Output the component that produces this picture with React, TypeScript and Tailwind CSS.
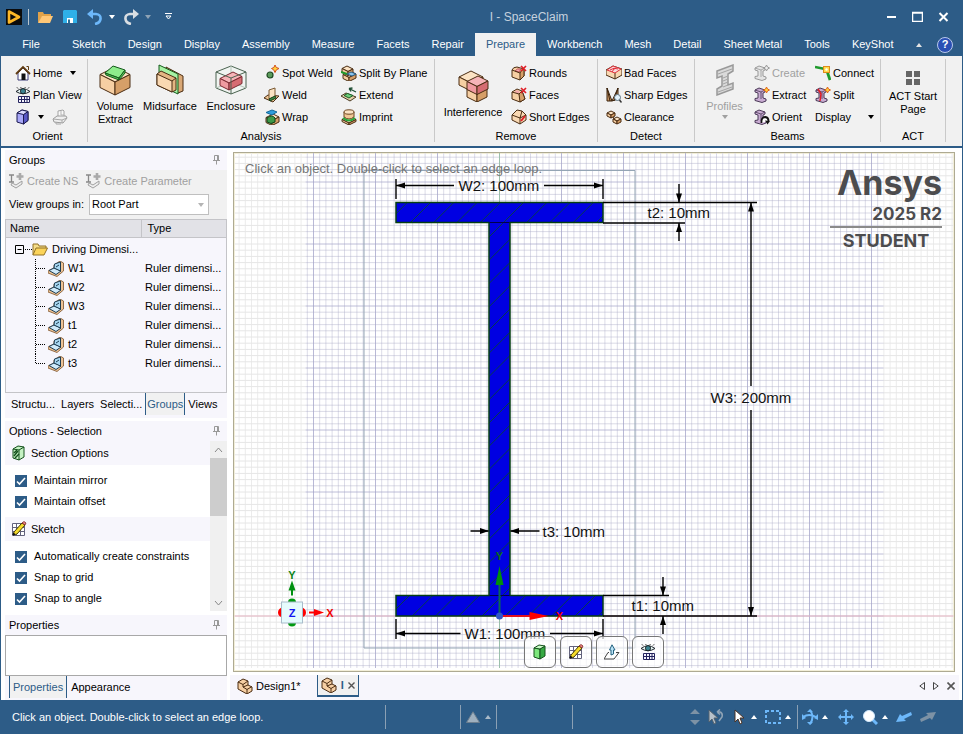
import { useState } from "react";
import type { ReactNode } from "react";
import clsx from "clsx";

type Tone = { top: string; left: string; right: string; line?: string };

const TAN: Tone = { top: "#fbe3c4", left: "#f6cfa3", right: "#d69f68" };
const PINK: Tone = { top: "#f6b4b8", left: "#f09aa0", right: "#d66c72" };

// Isometric block: x/y is the back corner, a runs right, b runs left, h is the height
const Block = ({ x, y, a, b, h, tone = TAN }: { x: number; y: number; a: number; b: number; h: number; tone?: Tone }) => {
    const p0 = [x, y];
    const p1 = [x + a, y + a / 2];
    const p2 = [x + a - b, y + (a + b) / 2];
    const p3 = [x - b, y + b / 2];
    const down = (p: number[]) => [p[0], p[1] + h];
    const pts = (...list: number[][]) => list.map((p) => p.join(",")).join(" ");
    return (
        <g stroke={tone.line ?? "#4a2c12"} strokeLinejoin="round" strokeWidth="1">
            <polygon points={pts(p0, p1, p2, p3)} fill={tone.top} />
            <polygon points={pts(p3, p2, down(p2), down(p3))} fill={tone.left} />
            <polygon points={pts(p2, p1, down(p1), down(p2))} fill={tone.right} />
        </g>
    );
};

const Svg = ({ size = 16, children }: { size?: 16 | 32; children: ReactNode }) => (
    <svg
        viewBox={size === 16 ? "0 0 16 16" : "0 0 32 32"}
        className={clsx("shrink-0", size === 16 ? "h-4 w-4" : "h-8 w-8")}
        fill="none"
        aria-hidden="true"
    >
        {children}
    </svg>
);

const Caret = ({ up, className }: { up?: boolean; className?: string }) => (
    <svg viewBox="0 0 6 4" className={clsx("h-1 w-1.5 shrink-0", className)} fill="currentColor" aria-hidden="true">
        <path d={up ? "M0 4h6L3 0z" : "M0 0h6L3 4z"} />
    </svg>
);

/* ---------- icons ---------- */

const HomeIcon = () => (
    <Svg>
        <path d="M3 8v7h10V8L8 3z" fill="#fff" stroke="#3d3c78" />
        <path d="M1 9l7-7 7 7" stroke="#5f3a10" strokeWidth="1.8" />
        <path d="M11.5 1.5h2V5" stroke="#5f3a10" />
        <path d="M6.5 8.5h4V15h-4z" fill="#111" />
    </Svg>
);

const EyeGridIcon = () => (
    <Svg>
        <path d="M1 4.500Q8-1 15 4.500 8 9 1 4.500z" fill="#e8f6f6" stroke="#1b2228" />
        <circle cx="8" cy="4.2" r="2.6" fill="#3c8390" stroke="#111" strokeWidth=".8" />
        <path d="M3 1.500L2 .4M6 .8L5.700 0M10 .8l.3-.8M13 1.500L14 .4" stroke="#111" />
        <path d="M3.500 9.500h11v6h-11zM3.500 12.500h11M6.500 9.500v6M9.500 9.500v6M12 9.500v6" fill="#f5f5ff" stroke="#25245e" />
    </Svg>
);

const PurpleCubeIcon = () => (
    <Svg>
        <path d="M2 4l5-3 6 1.500v9L8.500 15 2 13z" fill="#a9a8f8" stroke="#1b1a50" />
        <path d="M8.500 5.500L13 2.500v9L8.500 15z" fill="#5857c4" stroke="#1b1a50" />
        <path d="M2 4l6.500 1.500L13 2.500 7 1z" fill="#dcdcff" stroke="#1b1a50" />
    </Svg>
);

const GreyPlaneIcon = () => (
    <Svg>
        <path d="M6 8V2l5-1 1 1v6" fill="#f8f8f8" stroke="#a4a4a4" />
        <path d="M1 10l4-3h9l1 2-4 5-9-1z" fill="#efefef" stroke="#9c9c9c" />
        <path d="M1 10l9 1 5-2M10 11v3M4 13v2h5" stroke="#a8a8a8" />
        <path d="M9 2v4h3" stroke="#b5b5b5" />
    </Svg>
);

const VolumeIcon = () => (
    <Svg size={32}>
        <Block x={16} y={3} a={15} b={15} h={13} />
        <path d="M6 9l8-7 12 4-6 8z" fill="#8eec8c" stroke="#155a1c" />
        <path d="M6 9l14 5v2L7 11zM20 14l6-8v3l-6 7z" fill="#58cc5d" stroke="#155a1c" />
    </Svg>
);

const MidsurfaceIcon = () => (
    <Svg size={32}>
        <path d="M12 3l17 9v15l-5 2-12-8z" fill="#d9a876" stroke="#4a2c12" />
        <path d="M5 1l19 9v20L5 21z" fill="#a6f3a4" stroke="#155a1c" />
        <path d="M3 10l4-3 15 7v12l-4 2-15-7z" fill="#e3b583" stroke="#4a2c12" />
        <path d="M3 10l15 7v11L3 21z" fill="#f9d8b2" stroke="#4a2c12" />
        <path d="M18 17l4-3" stroke="#4a2c12" />
    </Svg>
);

const EnclosureIcon = () => (
    <Svg size={32}>
        <path d="M16 2l15 6v16l-15 6L1 24V8z" fill="#f0f4f1" stroke="#4a6350" />
        <path d="M1 24l15-6 15 6M16 2v16" stroke="#b4c4b8" />
        <Block x={18} y={8} a={9} b={13} h={7} tone={{ ...PINK, line: "#7a2830" }} />
        <path d="M1 8l15 6 15-6M16 14v16" stroke="#4a6350" />
    </Svg>
);

const InterferenceIcon = () => (
    <Svg size={32}>
        <Block x={20} y={13} a={10} b={10} h={9} />
        <Block x={14} y={1} a={12} b={12} h={8} />
        <Block x={21} y={6} a={10} b={11} h={8} tone={PINK} />
    </Svg>
);

const ProfilesIcon = () => (
    <Svg size={32}>
        <path
            d="M8 7l16-6v6l-5 3v11l5-2v6L8 31v-6l5-3V12l-5 2z"
            fill="#dadada"
            stroke="#999"
            strokeWidth="1.500"
        />
        <path d="M9 10l14-5M14 14l5-2M14 17l5-2M14 20l5-2M14 23l5-2M9 28l14-5" stroke="#a5a5a5" />
    </Svg>
);

const SpotWeldIcon = () => (
    <Svg>
        <circle cx="6" cy="10" r="3" fill="#5a9b5a" stroke="#1f4a22" strokeWidth="1.2" />
        <path d="M11 0l1.200 2.400L15 3.500l-2.600 1.300L11 7.500 9.700 4.800 7.500 3.500l2.400-1z" fill="#ffd23c" stroke="#d4501c" />
    </Svg>
);

const WeldIcon = () => (
    <Svg>
        <path d="M0 11l4-3 11 1-6 6z" fill="#f0c795" stroke="#4a2c12" />
        <path d="M5 3l6-2v9l-6 2z" fill="#fbe3c4" stroke="#7a5a34" />
        <path d="M5 12l6-3 1 2-6 3z" fill="#3d8a45" stroke="#14401a" />
    </Svg>
);

const WrapIcon = () => (
    <Svg>
        <Block x={9} y={5} a={6} b={7} h={5} />
        <path d="M2 3.500L8 1l5 2-5 3z" fill="#2f9ddc" stroke="#156a9c" />
        <path d="M3 9q5-4 8 0v4q-4 3-8 0z" fill="#3e9a48" stroke="#123f18" />
    </Svg>
);

const SplitIcon = () => (
    <Svg>
        <Block x={9} y={6} a={6} b={7} h={4} />
        <Block x={6} y={1} a={6} b={5} h={4} />
        <path d="M6 9l4-2 5 2-4 2z" fill="#8cc6ee" stroke="#2c5f86" />
        <path d="M0 7l6 2" stroke="#1f9a2c" strokeWidth="2" />
    </Svg>
);

const ExtendIcon = () => (
    <Svg>
        <path d="M0 9l5-3 10 4-6 4z" fill="#e3cfa8" stroke="#4a3a22" />
        <path d="M3 8.500L6.500 6.500l5.500 2-4 2.500z" fill="#6fcf7a" stroke="#1c5c26" />
        <path d="M15 5L8 1.500M8 1.500l3.500-.5M8 1.500l2 3" stroke="#1d4d33" strokeWidth="1.300" />
    </Svg>
);

const ImprintIcon = () => (
    <Svg>
        <Block x={8} y={7} a={7} b={7} h={2} />
        <path d="M3 3v5q5 4 10 0V3" fill="#f0c795" stroke="#6a4420" />
        <ellipse cx="8" cy="3" rx="5" ry="2.200" fill="#fbe3c4" stroke="#6a4420" />
        <path d="M2 9q6 5 12 0" stroke="#28a83a" strokeWidth="1.800" />
    </Svg>
);

const Cross = () => <path d="M10 1l5 5M15 1l-5 5" stroke="#e01e26" strokeWidth="1.700" />;

const RoundsIcon = () => (
    <Svg>
        <path d="M1 5q1-3 5-3l7 2v7l-4 4-8-3z" fill="#f6cfa3" stroke="#4a2c12" />
        <path d="M9 8q1-3 4-4v7l-4 4z" fill="#d69f68" stroke="#4a2c12" />
        <path d="M4 6q2-3 6-2l-2 3z" fill="#f4a9ac" stroke="#c2525a" />
        <path d="M1 5l8 3" stroke="#4a2c12" />
        <Cross />
    </Svg>
);

const FacesIcon = () => (
    <Svg>
        <path d="M1 5l5-3 5 2 3 8-5 3-8-3z" fill="#f6cfa3" stroke="#4a2c12" />
        <path d="M8 7l3-3 3 8-5 3z" fill="#d69f68" stroke="#4a2c12" />
        <path d="M3 5l3-2 3 2-2 1.500z" fill="#f4a9ac" />
        <path d="M1 5l7 2" stroke="#4a2c12" />
        <Cross />
    </Svg>
);

const ShortEdgesIcon = () => (
    <Svg>
        <path d="M1 6l5-5 5 1 4 4v5l-6 4-8-4z" fill="#f9d8b2" stroke="#4a2c12" />
        <path d="M1 6l8 3 6-3M9 9v6M9 9l2-7" stroke="#4a2c12" />
        <path d="M10 12l4-5" stroke="#e01e26" strokeWidth="2" />
    </Svg>
);

const BadFacesIcon = () => (
    <Svg>
        <path d="M0 5l7-4 9 3v6l-7 4-9-4z" fill="#f9d8b2" stroke="#4a2c12" />
        <path d="M9 8v6" stroke="#4a2c12" />
        <path d="M1 5l6-4 8 3-6 4z" fill="#fbd9dc" stroke="#e0303a" />
        <path d="M4 5q4-3 8-1M6 7q2-4 4-4" stroke="#e0303a" />
    </Svg>
);

const SharpEdgesIcon = () => (
    <Svg>
        <path d="M1 1l5 13H1zM12 1L6 14l6-2z" fill="#c99664" stroke="#3a220c" />
        <path d="M1 1l3 13M12 1L8 14" stroke="#3a220c" />
        <circle cx="11.500" cy="10.500" r="3" fill="#e2f1fa" stroke="#5e7482" />
        <path d="M13.500 13l2 2.500" stroke="#333" strokeWidth="1.500" />
    </Svg>
);

const ClearanceIcon = () => (
    <Svg>
        <Block x={5} y={2} a={4} b={4} h={3} />
        <Block x={11} y={8} a={4} b={4} h={3} />
        <path d="M7 8l2 3" stroke="#4a2c12" />
    </Svg>
);

const BeamIcon = ({ kind }: { kind: "create" | "extract" | "orient" | "split" }) => {
    const off = kind === "create";
    const line = off ? "#999" : "#4b3a58";
    return (
        <Svg>
            <path
                d="M1 3l4-2 6 2v2l-2 1v5l3 1v2l-4 1.500-7-2v-2l3-.5V6L1 5z"
                fill={off ? "#e4e4e4" : "#c9acd2"}
                stroke={line}
            />
            <path d="M1 3l6 2 4-2M7 5v7" stroke={line} strokeWidth=".8" />
            {kind === "split" && <path d="M3 2l3 5-1 7" stroke="#e01e26" strokeWidth="1.500" />}
            {kind === "orient" ? (
                <>
                    <path d="M7.500 14q-.5-6 4-6 3 .5 3 4" stroke="#111" strokeWidth="1.800" fill="#fff" />
                    <path d="M11 11.500l5 .5-2.500 3.500z" fill="#111" />
                </>
            ) : (
                <path
                    d="M12.500 0l1 2 2 1-2 1-1 2-1-2-2-1 2-1z"
                    fill={off ? "#eee" : "#ffd23c"}
                    stroke={off ? "#999" : "#e0641c"}
                />
            )}
        </Svg>
    );
};

const ConnectIcon = () => (
    <Svg>
        <path d="M0 2l10 2" stroke="#1f9a2c" strokeWidth="2.400" />
        <path d="M12 6l3 9" stroke="#1f9a2c" strokeWidth="2.800" />
        <rect x="8.500" y="1.500" width="6" height="6" fill="#ffdc4a" stroke="#e08a1c" />
        <circle cx="11.500" cy="4.500" r="1.200" fill="#fff" />
    </Svg>
);

const ActIcon = () => (
    <Svg>
        <path d="M1 1h6v6H1zM9 1h6v6H9zM1 9h6v6H1zM9 9h6v6H9z" fill="#666" />
    </Svg>
);

const CreateGroupIcon = () => (
    <Svg>
        <path d="M0 2h5M2.500 2v7M0 9h5" stroke="#888" strokeWidth="1.300" />
        <path d="M11 0v7M7.500 3.500h7" stroke="#aaa" strokeWidth="2.600" />
        <path d="M3 10l4 2 6-4v3l-6 4-5-3z" fill="#eee" stroke="#a0a0a0" />
    </Svg>
);

const FolderIcon = () => (
    <Svg>
        <path d="M1 14V3h5l1 2h7v3" fill="#f5dd8a" stroke="#927127" />
        <path d="M1 14L4 7h11.500L12 14z" fill="#fbd35a" stroke="#927127" />
    </Svg>
);

const DimensionIcon = () => (
    <Svg>
        <path d="M0 10l6-3V4l6-4 3.500 2v8L9 15.500 0 12z" fill="#edc396" stroke="#7a5028" strokeWidth=".8" />
        <path d="M1 9.500L6 7l7 3-5 3.500z" fill="#cfeafa" stroke="#1d3c52" />
        <path d="M6 7l.500-4L12.500 1v9z" fill="#a8d8f2" stroke="#1d3c52" />
        <path d="M8 6l3-2" stroke="#1d3c52" />
    </Svg>
);

const SectionIcon = () => (
    <Svg>
        <path d="M2 4l5-3 6 1v10l-5 3-6-2z" fill="#c5f2c3" stroke="#14501c" />
        <path d="M2 4l6 1 5-3M8 5v10" stroke="#14501c" />
        <path d="M3 8l3-3M3 11l4-5M4 13l4-4" stroke="#14501c" strokeWidth="1.400" />
    </Svg>
);

const GreenCubeIcon = () => (
    <Svg>
        <path d="M2 4l6 1v10l-6-2z" fill="#7ce67c" stroke="#14501c" />
        <path d="M8 5l5-3v10l-5 3z" fill="#35a843" stroke="#14501c" />
        <path d="M2 4l5-3 6 1-5 3z" fill="#c9fac7" stroke="#14501c" />
    </Svg>
);

const PencilGridIcon = () => (
    <Svg>
        <path d="M1.500 2.500h12v12h-12zM5.500 2v13M9.500 2v13M1 6.500h13M1 10.500h13" fill="#fff" stroke="#62627c" />
        <path d="M2 14l1-3 8-9 3 2-8 9z" fill="#f5dc2c" stroke="#4a3f06" />
        <path d="M11 2l3 2 1-2-2-1.500z" fill="#ee8a8a" stroke="#7a2020" strokeWidth=".8" />
        <path d="M2 14l.6-2 1.400 1.400z" fill="#111" stroke="#111" />
    </Svg>
);

const PlaneArrowIcon = () => (
    <Svg>
        <path d="M5 8.500H4L0 15h10l5-6.500h-3" stroke="#444" />
        <path d="M7 11V6H5.500L8 .8 11 6H9.500v4z" fill="#b9e3f7" stroke="#23617f" />
    </Svg>
);

const PartIcon = () => (
    <Svg>
        <path d="M1 4l5-3 5 2v4l4 2v4l-5 3-9-5z" fill="#f6cfa3" stroke="#4a2c12" />
        <path d="M1 4l5 2.500 5-3.500M6 6.500V9l4 2.500 5-3M10 11.500V16M6 9l5-2" stroke="#4a2c12" />
    </Svg>
);

const PinIcon = () => (
    <svg viewBox="0 0 9 10" className="h-2.5 w-[9px]" fill="none" stroke="#999" aria-hidden="true">
        <path d="M2.500 .5h4v5h-4zM1 5.500h7M4.500 6v3.500M5.500 1v4" />
    </svg>
);

/* ---------- title bar and ribbon ---------- */

const TitleBar = () => (
    <header className="flex h-[33px] items-center bg-[#2d5c87] pl-[5px] text-white">
        <svg viewBox="0 0 16 16" className="h-4 w-4" aria-label="SpaceClaim" role="img">
            <path d="M0 0h16v16H0z" fill="#0b0b0b" />
            <path d="M3 2.500l10 5.500-10 5.500z" fill="none" stroke="#fdb827" strokeWidth="2.600" strokeLinejoin="round" />
        </svg>
        <span className="ml-1.5 h-4 w-px bg-[#b9c4cc]" />
        <button aria-label="Open" className="ml-2">
            <Svg>
                <path d="M1 14V3h5l1 2h7v3H5z" fill="#e0a24a" />
                <path d="M1 14l4-7h11l-3 7z" fill="#ffc777" />
            </Svg>
        </button>
        <button aria-label="Save" className="ml-[9px]">
            <Svg>
                <path d="M2 1h12l1 1v12H1V2z" fill="#2fb0e8" />
                <path d="M5 9h6v5H5z" fill="#fff" />
                <path d="M6 10.500h2V14H6z" fill="#2c6f96" />
            </Svg>
        </button>
        <button aria-label="Undo" className="ml-[9px]">
            <Svg>
                <path d="M3 5h6q5 .5 4.500 5-.5 4-5.500 5" stroke="#6db8fa" strokeWidth="2.600" />
                <path d="M0 5l6-5v10z" fill="#6db8fa" />
            </Svg>
        </button>
        <Caret className="ml-1.5" />
        <button aria-label="Redo" className="ml-2">
            <Svg>
                <path d="M13 5H7q-5 .5-4.500 5 .5 4 5.500 5" stroke="#d9dee3" strokeWidth="2.600" />
                <path d="M16 5l-6-5v10z" fill="#d9dee3" />
            </Svg>
        </button>
        <Caret className="ml-1.5 text-[#8fa3b5]" />
        <svg viewBox="0 0 7 7" className="ml-3.5 h-[7px] w-[7px]" fill="none" stroke="#fff" aria-hidden="true">
            <path d="M0 .5h7M1 3h5L3.500 6z" />
        </svg>
        <h1 className="flex-1 text-center text-[12px] text-[#c6d2de]">I - SpaceClaim</h1>
        <div className="flex items-center gap-[15px] pr-[13px]">
            {["Minimize", "Maximize", "Close"].map((name) => (
                <button key={name} aria-label={name}>
                    <svg viewBox="0 0 11 11" className="h-[11px] w-[11px]" fill="none" stroke="#fff" aria-hidden="true">
                        {name === "Minimize" && <path d="M1 6h9" strokeWidth="2" />}
                        {name === "Maximize" && <path d="M.5 1.500h10v9H.5zM0 2h11" strokeWidth="1.500" />}
                        {name === "Close" && <path d="M1.500 2l8 8M9.500 2l-8 8" strokeWidth="2" />}
                    </svg>
                </button>
            ))}
        </div>
    </header>
);

const tabs = [
    "Sketch", "Design", "Display", "Assembly", "Measure", "Facets", "Repair", "Prepare",
    "Workbench", "Mesh", "Detail", "Sheet Metal", "Tools", "KeyShot",
];

const RibbonTabs = () => {
    const [active, setActive] = useState("Prepare");
    return (
        <nav className="flex h-[23px] items-stretch bg-[#2d5c87] text-white">
            <button className="w-[60px] shrink-0">File</button>
            {tabs.map((tab) => (
                <button
                    key={tab}
                    onClick={() => setActive(tab)}
                    className={clsx(
                        "shrink-0 px-[11px] whitespace-nowrap",
                        active === tab && "bg-[#f1f1f1] text-[#2d5c87]"
                    )}
                >
                    {tab}
                </button>
            ))}
            <div className="flex flex-1 items-center justify-end gap-[15px] pr-[9px]">
                <Caret up className="text-[#e4e4e4]" />
                <button
                    aria-label="Help"
                    className="flex h-4 w-4 items-center justify-center rounded-full border border-[#b8c8ea] bg-[#2a4fb4] text-[11px] font-bold"
                >
                    ?
                </button>
            </div>
        </nav>
    );
};

const Tool = ({ icon, label, caret, disabled }: { icon?: ReactNode; label: string; caret?: boolean; disabled?: boolean }) => (
    <button
        disabled={disabled}
        className="flex h-[22px] items-center gap-0.5 whitespace-nowrap disabled:text-[#a0a0a0]"
    >
        {icon}
        <span>{label}</span>
        {caret && <Caret className="ml-1.5" />}
    </button>
);

const BigTool = ({ icon, children, className, disabled }: { icon: ReactNode; children: ReactNode; className?: string; disabled?: boolean }) => (
    <button
        disabled={disabled}
        className={clsx("flex shrink-0 flex-col items-center text-center leading-[13px] disabled:text-[#a0a0a0]", className)}
    >
        {icon}
        <span className="mt-1">{children}</span>
    </button>
);

const RibbonGroup = ({ label, className, children }: { label: string; className: string; children: ReactNode }) => (
    <section aria-label={label} className={clsx("flex h-[83px] shrink-0 flex-col border-r border-[#c9c9c9]", className)}>
        <div className="flex h-[69px] shrink-0 items-start pt-[3px]">{children}</div>
        <p className="h-4 shrink-0 text-center leading-4">{label}</p>
    </section>
);

const Ribbon = () => (
    <div className="flex h-[92px] overflow-hidden border-b-2 border-[#2d5c87] bg-[#f1f1f1] pt-[3px]">
        <RibbonGroup label="Orient" className="w-[87px] pl-[7px]">
            <div className="pl-[7px]">
                <Tool icon={<HomeIcon />} label="Home" caret />
                <Tool icon={<EyeGridIcon />} label="Plan View" />
                <div className="flex h-[22px] items-center gap-2">
                    <button aria-label="View orientation" className="flex items-center gap-[7px]">
                        <PurpleCubeIcon />
                        <Caret />
                    </button>
                    <button aria-label="Snap view" disabled><GreyPlaneIcon /></button>
                </div>
            </div>
        </RibbonGroup>

        <RibbonGroup label="Analysis" className="w-[347px]">
            <BigTool icon={<VolumeIcon />} className="mt-0.5 ml-1 w-[46px]">Volume<br />Extract</BigTool>
            <BigTool icon={<MidsurfaceIcon />} className="mt-0.5 w-16">Midsurface</BigTool>
            <BigTool icon={<EnclosureIcon />} className="mt-0.5 w-[58px]">Enclosure</BigTool>
            <div className="ml-1 w-[77px] shrink-0">
                <Tool icon={<SpotWeldIcon />} label="Spot Weld" />
                <Tool icon={<WeldIcon />} label="Weld" />
                <Tool icon={<WrapIcon />} label="Wrap" />
            </div>
            <div>
                <Tool icon={<SplitIcon />} label="Split By Plane" />
                <Tool icon={<ExtendIcon />} label="Extend" />
                <Tool icon={<ImprintIcon />} label="Imprint" />
            </div>
        </RibbonGroup>

        <RibbonGroup label="Remove" className="w-[163px]">
            <BigTool icon={<InterferenceIcon />} className="mt-2 ml-1 w-[68px]">Interference</BigTool>
            <div className="ml-1">
                <Tool icon={<RoundsIcon />} label="Rounds" />
                <Tool icon={<FacesIcon />} label="Faces" />
                <Tool icon={<ShortEdgesIcon />} label="Short Edges" />
            </div>
        </RibbonGroup>

        <RibbonGroup label="Detect" className="w-[97px]">
            <div className="pl-2">
                <Tool icon={<BadFacesIcon />} label="Bad Faces" />
                <Tool icon={<SharpEdgesIcon />} label="Sharp Edges" />
                <Tool icon={<ClearanceIcon />} label="Clearance" />
            </div>
        </RibbonGroup>

        <RibbonGroup label="Beams" className="w-[186px]">
            <BigTool icon={<ProfilesIcon />} className="mt-0.5 ml-1 w-[51px]" disabled>
                Profiles
                <Caret className="mx-auto mt-0.5" />
            </BigTool>
            <div className="ml-1 w-[59px] shrink-0">
                <Tool icon={<BeamIcon kind="create" />} label="Create" disabled />
                <Tool icon={<BeamIcon kind="extract" />} label="Extract" />
                <Tool icon={<BeamIcon kind="orient" />} label="Orient" />
            </div>
            <div className="pl-0.5">
                <Tool icon={<ConnectIcon />} label="Connect" />
                <Tool icon={<BeamIcon kind="split" />} label="Split" />
                <button className="flex h-[22px] w-full items-center justify-between">
                    Display <Caret />
                </button>
            </div>
        </RibbonGroup>

        <RibbonGroup label="ACT" className="w-[65px]">
            <button className="flex w-full flex-col items-center pt-2 leading-[13px]">
                <ActIcon />
                <span className="mt-1 text-center">ACT Start<br />Page</span>
            </button>
        </RibbonGroup>
    </div>
);

/* ---------- side panels ---------- */

const PanelHeader = ({ title }: { title: string }) => (
    <div className="flex h-5 shrink-0 items-center justify-between bg-[#f7f6fc] pr-1.5 pl-1">
        <h2 className="leading-4">{title}</h2>
        <button aria-label={`Pin ${title}`}><PinIcon /></button>
    </div>
);

const groups = ["W1", "W2", "W3", "t1", "t2", "t3"];

const GroupsTable = () => (
    <div className="flex-1 border border-[#c4c4c8] bg-[#f7f6fc]">
        <table className="w-full table-fixed border-collapse text-left">
            <thead>
                <tr className="h-[17px] border-b border-[#c4c4c8] bg-[#e2e2e7]">
                    <th className="w-[135px] border-r border-[#c4c4c8] pl-1 font-normal">Name</th>
                    <th className="pl-1.5 font-normal">Type</th>
                </tr>
            </thead>
            <tbody>
                <tr className="h-[22px]">
                    <td className="pt-0.5" colSpan={2}>
                        <div className="flex items-center">
                            <svg viewBox="0 0 17 9" className="ml-[9px] h-[9px] w-[17px]" fill="none" stroke="#000">
                                <path d="M.5 .5h8v8h-8zM2.500 4.500h4" />
                                <path d="M10 4.500h7" strokeDasharray="1 1" />
                            </svg>
                            <FolderIcon />
                            <span className="ml-1">Driving Dimensi...</span>
                        </div>
                    </td>
                </tr>
                {groups.map((name, i) => (
                    <tr key={name} className="h-[19px]">
                        <td>
                            <div className="flex items-center">
                                <svg viewBox="0 0 10 19" className="ml-[29px] h-[19px] w-2.5" fill="none" stroke="#000" strokeDasharray="1 1">
                                    <path d={i === groups.length - 1 ? "M.5 0v10" : "M.5 0v19"} />
                                    <path d="M1 9.500h9" />
                                </svg>
                                <span className="ml-[3px]"><DimensionIcon /></span>
                                <span className="ml-1">{name}</span>
                            </div>
                        </td>
                        <td className="pl-1">Ruler dimensi...</td>
                    </tr>
                ))}
            </tbody>
        </table>
    </div>
);

const Check = ({ label }: { label: string }) => (
    <label className="flex h-[21px] items-center gap-[7px] pl-2.5">
        <span className="relative flex">
            <input type="checkbox" defaultChecked className="peer h-3 w-3 appearance-none border border-[#2d5c87] bg-white checked:bg-[#2d5c87]" />
            <svg viewBox="0 0 12 12" className="pointer-events-none absolute inset-0 hidden h-3 w-3 peer-checked:block" fill="none" stroke="#fff" strokeWidth="1.600">
                <path d="M2 6.500l2.500 2.500L10 3" />
            </svg>
        </span>
        {label}
    </label>
);

const OptionSection = ({ icon, title, items }: { icon: ReactNode; title: string; items: string[] }) => (
    <section>
        <h3 className="flex h-6 items-center gap-1 bg-[#f7f6fc] pl-1.5">{icon}{title}</h3>
        <div className="py-[5px]">
            {items.map((item) => <Check key={item} label={item} />)}
        </div>
    </section>
);

const sideTabs = ["Structu...", "Layers", "Selecti...", "Groups", "Views"];

const Sidebar = () => (
    <aside className="flex w-[222px] shrink-0 flex-col pt-0.5">
        <PanelHeader title="Groups" />
        <div className="h-[49px] shrink-0 bg-[#f1f1f1] pl-1">
            <div className="flex h-6 gap-2">
                <Tool icon={<CreateGroupIcon />} label="Create NS" disabled />
                <Tool icon={<CreateGroupIcon />} label="Create Parameter" disabled />
            </div>
            <div className="flex items-center">
                <label htmlFor="scope" className="w-20">View groups in:</label>
                <div className="relative w-[120px]">
                    <select id="scope" className="block h-[21px] w-full appearance-none border border-[#bfbfbf] bg-white px-0.5">
                        <option>Root Part</option>
                    </select>
                    <Caret className="pointer-events-none absolute top-[9px] right-[5px] text-[#b4b4b4]" />
                </div>
            </div>
        </div>
        <GroupsTable />
        <div className="flex h-[25px] shrink-0 items-start bg-[#f7f6fc] pl-[3px]">
            {sideTabs.map((tab) => (
                <button
                    key={tab}
                    className={clsx(
                        "h-[22px] whitespace-nowrap",
                        tab === "Groups" ? "border-x border-[#2d5c87] bg-[#f1f1f1] px-px text-[#2d5c87]" : "px-[3px]"
                    )}
                >
                    {tab}
                </button>
            ))}
        </div>
        <div className="mt-[3px]"><PanelHeader title="Options - Selection" /></div>
        <div className="flex h-[170px] shrink-0 overflow-hidden">
            <div className="flex-1">
                <OptionSection icon={<SectionIcon />} title="Section Options" items={["Maintain mirror", "Maintain offset"]} />
                <OptionSection icon={<PencilGridIcon />} title="Sketch" items={["Automatically create constraints", "Snap to grid", "Snap to angle"]} />
            </div>
            <div className="flex w-[17px] flex-col items-center bg-[#f0f0f0]">
                <svg viewBox="0 0 9 17" className="h-[17px] w-[9px]" fill="none" stroke="#888"><path d="M1 11l3.500-4L8 11" /></svg>
                <div className="h-[58px] w-full bg-[#cdcdcd]" />
                <svg viewBox="0 0 9 17" className="mt-auto h-[17px] w-[9px]" fill="none" stroke="#888"><path d="M1 7l3.500 4L8 7" /></svg>
            </div>
        </div>
        <div className="mt-1"><PanelHeader title="Properties" /></div>
        <div className="h-[41px] shrink-0 border border-[#a8a8a8] bg-white" />
        <div className="flex h-6 shrink-0 items-start bg-[#f7f6fc] pl-1">
            <button className="h-[22px] border-x border-[#2d5c87] bg-[#f1f1f1] px-[3px] text-[#2d5c87]">Properties</button>
            <button className="h-[22px] px-1">Appearance</button>
        </div>
    </aside>
);

/* ---------- sketch canvas ---------- */

const STEP = 6.2;

// Lines are laid out around the sketch origin
const Grid = () => {
    const cols = Array.from({ length: 117 }, (_, i) => i - 43);
    const rows = Array.from({ length: 84 }, (_, i) => i - 74);
    return (
        <g>
            {cols.map((c) => {
                const x = c * STEP;
                const inside = x > -194 && x < 384;
                const major = c % 10 === 0;
                return (
                    <path
                        key={c}
                        d={`M${x} -463V52`}
                        stroke={inside ? (major ? "#b9b9d6" : "#dcdce8") : "#ececec"}
                    />
                );
            })}
            {rows.map((r) => (
                <g key={r}>
                    <path d={`M-265 ${r * STEP}H-194M384 ${r * STEP}H454`} stroke="#e6e6e6" />
                    <path
                        d={`M-194 ${r * STEP}H384`}
                        stroke={r % 10 === 0 ? "#a4a4c8" : "#a8a8c4"}
                        strokeOpacity={r % 10 === 0 ? 0.7 : 0.42}
                    />
                </g>
            ))}
        </g>
    );
};

const turn = { right: 0, down: 90, left: 180, up: 270 };

const Head = ({ x, y, dir }: { x: number; y: number; dir: keyof typeof turn }) => (
    <path d="M0 0L-9 -3V3z" fill="#000" stroke="none" transform={`translate(${x} ${y}) rotate(${turn[dir]})`} />
);

const BEAM = "M-103.500 -413.500H103.500V-393.500H10.500V-20.500H103.500V0H-103.500V-20.500H-10.500V-393.500H-103.500z";

const Drawing = () => (
    <svg className="absolute inset-0 h-full w-full" fill="none" role="img" aria-label="I-beam sketch">
        <defs>
            <clipPath id="beam"><path d={BEAM} /></clipPath>
        </defs>
        <g transform="translate(265.5 463)">
            <Grid />
            <path d="M-265 0H454" stroke="#e6b4c2" />
            <path d="M0 -463V52" stroke="#9cc0ac" />
            <path d="M-135.500 -445.500H135.500V32H-135.500z" stroke="#94a5b4" />

            <path d={BEAM} fill="#0000e2" />
            <g clipPath="url(#beam)" stroke="#063c4a">
                {Array.from({ length: 46 }, (_, i) => {
                    const sum = -505.75 + i * 23.25;
                    return <path key={i} d={`M-104 ${sum + 104}L104 ${sum - 104}`} />;
                })}
            </g>
            <path d={BEAM} stroke="#063f12" strokeWidth="1.500" />
            <path d="M-10 -393.500H10M-10 -20.500H10" stroke="#00004a" />

            <g stroke="#000" strokeWidth="1.400">
                <path d="M-103.500 -437v20M103.500 -437v20M-103 -430.500H-45.500M44.500 -430.500H103" />
                <path d="M103.500 -413.500H257.500M103.500 -393H185.500M179.500 -432V-414M179.500 -375V-393" />
                <path d="M251.500 -413V-230M251.500 -206V0M103.500 0H257.500" />
                <path d="M103.500 -20.500H169.500M163.500 -39V-21M163.500 18V0" />
                <path d="M-29 -85H-11M40 -85H11" />
                <path d="M-103.500 3v20M103.500 3v20M-103 17.500H-39M50.500 17.500H103" />
            </g>
            <Head x={-103.5} y={-430.5} dir="left" />
            <Head x={103.5} y={-430.5} dir="right" />
            <Head x={179.5} y={-413.5} dir="down" />
            <Head x={179.5} y={-393} dir="up" />
            <Head x={251.5} y={-413.5} dir="up" />
            <Head x={251.5} y={0} dir="down" />
            <Head x={163.5} y={-20.5} dir="down" />
            <Head x={163.5} y={0} dir="up" />
            <Head x={-10.5} y={-85} dir="right" />
            <Head x={10.5} y={-85} dir="left" />
            <Head x={-103.5} y={17.5} dir="left" />
            <Head x={103.5} y={17.5} dir="right" />

            <g fill="#111" fontSize="15">
                <text x="-41" y="-425">W2: 100mm</text>
                <text x="148" y="-398">t2: 10mm</text>
                <text x="211" y="-213">W3: 200mm</text>
                <text x="43" y="-79">t3: 10mm</text>
                <text x="132" y="-5">t1: 10mm</text>
                <text x="-35" y="23">W1: 100mm</text>
            </g>

            {/* origin axes */}
            <path d="M0 0V-32" stroke="#0a6a52" strokeWidth="2" />
            <path d="M0 -50L4 -31H-4z" fill="#00900a" />
            <path d="M0 0H32" stroke="#e01020" strokeWidth="2" />
            <path d="M49 0L30 -4V4z" fill="#f00" />
            <circle r="3.500" fill="#3157c8" />
            <g fontSize="11" textAnchor="middle" fontWeight="bold">
                <text x="0" y="-56" fill="#0a6d16">Y</text>
                <text x="60" y="4" fill="#f00000">X</text>
            </g>

            {/* view triad */}
            <g transform="translate(-207.5 -3.5)">
                <circle cy="-10" r="4" fill="#009a10" />
                <circle cy="10" r="4" fill="#009a10" />
                <circle cx="-9" r="5" fill="#f00" />
                <circle cx="9" r="5" fill="#f00" />
                <rect x="-10.500" y="-10.500" width="21" height="21" fill="#e6fbfd" stroke="#a9bccb" />
                <path d="M0 -17V-24" stroke="#009010" strokeWidth="2" />
                <path d="M0 -32L3.500 -22H-3.500z" fill="#009010" />
                <path d="M17 0H23" stroke="#f00" strokeWidth="2" />
                <path d="M32 0L22 -3.500V3.500z" fill="#f00" />
                <g fontSize="11" textAnchor="middle" fontWeight="bold">
                    <text y="4" fill="#1414f0">Z</text>
                    <text y="-34" fill="#0a8416">Y</text>
                    <text x="38" y="4" fill="#f00000">X</text>
                </g>
            </g>
        </g>
    </svg>
);

const modes = [
    { name: "3D mode", icon: <GreenCubeIcon /> },
    { name: "Sketch mode", icon: <PencilGridIcon /> },
    { name: "Select new sketch plane", icon: <PlaneArrowIcon /> },
    { name: "Plan view", icon: <EyeGridIcon /> },
];

const Canvas = () => (
    <div className="relative mt-1 mr-[7px] ml-[3px] flex-1 overflow-hidden border border-[#aeaa92] bg-white outline outline-1 -outline-offset-2 outline-[#f3efd8]">
        <Drawing />
        <p className="absolute top-2 left-[11px] text-[13px] leading-4 text-[#757575]">
            Click an object. Double-click to select an edge loop.
        </p>
        <div className="absolute top-[9px] right-3 flex w-[112px] flex-col items-end font-['Inter',sans-serif] font-bold text-[#4c4c4e]">
            <span className="text-[34px] leading-[42px]">Λnsys</span>
            <span className="text-[17px] leading-5">2025 R2</span>
            <span className="mt-0.5 h-0.5 w-full bg-[#8a8a8a]" />
            <span className="mt-0.5 w-full text-center text-[18px] leading-[22px]">STUDENT</span>
        </div>
        <div className="absolute bottom-[3px] left-[290px] flex gap-1">
            {modes.map(({ name, icon }) => (
                <button
                    key={name}
                    aria-label={name}
                    className="flex h-8 w-8 items-center justify-center rounded-md border border-[#777] bg-white/70"
                >
                    {icon}
                </button>
            ))}
        </div>
    </div>
);

const DocumentTabs = () => (
    <div className="mt-[3px] mr-[3px] flex h-[25px] shrink-0 items-start bg-[#f7f6fc] pl-[7px]">
        <button className="flex h-[22px] items-center gap-[3px]"><PartIcon />Design1*</button>
        <div className="ml-4 flex h-[22px] w-[42px] items-center border border-t-0 border-b-2 border-[#2d5c87] bg-[#f1f1f1] pl-[3px]">
            <button className="flex items-center gap-1 font-bold text-[#2d5c87]"><PartIcon />I</button>
            <button aria-label="Close I" className="ml-1">
                <svg viewBox="0 0 7 7" className="h-[7px] w-[7px]" stroke="#555" strokeWidth="1.400"><path d="M.5 .5l6 6M6.500 .5l-6 6" /></svg>
            </button>
        </div>
        <div className="ml-auto flex h-[22px] items-center gap-2 pr-1">
            <button aria-label="Previous tab">
                <svg viewBox="0 0 6 8" className="h-2 w-1.5" fill="none" stroke="#444"><path d="M5.500 .5v7L.8 4z" /></svg>
            </button>
            <button aria-label="Next tab">
                <svg viewBox="0 0 6 8" className="h-2 w-1.5" fill="none" stroke="#444"><path d="M.5 .5v7L5.200 4z" /></svg>
            </button>
            <button aria-label="Close tab">
                <svg viewBox="0 0 8 8" className="h-2 w-2" stroke="#555" strokeWidth="1.600"><path d="M.5 .5l7 7M7.500 .5l-7 7" /></svg>
            </button>
        </div>
    </div>
);

/* ---------- status bar ---------- */

const Divider = () => <span className="h-6 w-px shrink-0 bg-[#8ba0b4]" />;

const StatusBar = () => (
    <footer className="flex h-[34px] shrink-0 items-center bg-[#2d5c87] pr-[26px] pl-[11px] text-white">
        <span className="w-[373px] shrink-0">Click an object. Double-click to select an edge loop.</span>
        <Divider />
        <span className="w-[74px] shrink-0" />
        <Divider />
        <button aria-label="Messages" className="flex w-[35px] shrink-0 items-center justify-center gap-[5px] text-[#a9bac9]">
            <svg viewBox="0 0 14 12" className="h-3 w-3.5" fill="#9fb0bf" stroke="#6d7f90"><path d="M7 .8L13.500 11.500H.5z" /></svg>
            <Caret up />
        </button>
        <Divider />
        <span className="w-[75px] shrink-0" />
        <Divider />
        <div className="ml-auto flex items-center">
            <svg viewBox="0 0 10 18" className="h-[18px] w-2.5" fill="#7d92a5" aria-hidden="true"><path d="M0 6h10L5 1zM0 12h10l-5 5z" /></svg>
            <button aria-label="Revert selection" className="ml-2">
                <Svg>
                    <path d="M1 1v12l3-3 2 5 2-1-2-5h4z" fill="#b8c2ca" stroke="#54636f" />
                    <path d="M9 3h3q3 1 2 5l-3 4M9 3l3-2.500M9 3l3 2.500" stroke="#8fa3b5" strokeWidth="1.600" />
                </Svg>
            </button>
            <button aria-label="Select" className="ml-2 flex items-center gap-[3px]">
                <Svg><path d="M3 1v12l3-3 2 5 2-1-2-5h4z" fill="#fff" stroke="#4b3325" /></Svg>
                <Caret up />
            </button>
            <button aria-label="Selection mode" className="ml-2 flex items-center gap-1">
                <Svg><path d="M1 2h14v12H1z" stroke="#6db8fa" strokeWidth="2" strokeDasharray="3 2" /></Svg>
                <Caret up />
            </button>
            <span className="ml-1.5 flex"><Divider /></span>
            <button aria-label="Spin" className="ml-1 flex items-center gap-1">
                <Svg>
                    <path d="M1 8q6-4 13 0M8 1q5 7 0 14" stroke="#6db8fa" strokeWidth="2" />
                    <path d="M0 5v6l4-2zM16 5v6l-4-2zM5 3l3-3 3 3zM5 13l3 3 3-3z" fill="#6db8fa" />
                </Svg>
                <Caret up />
            </button>
            <button aria-label="Pan" className="ml-2.5">
                <Svg>
                    <path d="M1 8h14M8 1v14" stroke="#6db8fa" strokeWidth="2" />
                    <path d="M0 8l3-3v6zM16 8l-3-3v6zM8 0L5 3h6zM8 16l-3-3h6z" fill="#6db8fa" />
                </Svg>
            </button>
            <button aria-label="Zoom" className="ml-2 flex items-center gap-1">
                <Svg>
                    <path d="M10 10l5 5" stroke="#6db8fa" strokeWidth="3" />
                    <circle cx="7" cy="7" r="5.500" fill="#fff" stroke="#d2eaff" />
                </Svg>
                <Caret up />
            </button>
            <button aria-label="Previous view" className="ml-2">
                <Svg><path d="M0 13l4-8 2 2 9-4 1 3-8 4 2 2z" fill="#6db8fa" /></Svg>
            </button>
            <button aria-label="Next view" className="ml-2">
                <Svg><path d="M16 3l-4 8-2-2-9 4-1-3 8-4-2-2z" fill="#7d92a5" /></Svg>
            </button>
        </div>
    </footer>
);

export default function App() {
    return (
        <div className="flex min-h-screen flex-col border-x border-[#2d5c87] bg-white font-['Liberation_Sans',Arial,sans-serif] text-[11px] text-black">
            <TitleBar />
            <RibbonTabs />
            <Ribbon />
            <main className="flex flex-1 pl-1">
                <Sidebar />
                <div className="flex min-w-0 flex-1 flex-col pl-[3px]">
                    <Canvas />
                    <DocumentTabs />
                </div>
            </main>
            <StatusBar />
        </div>
    );
}
